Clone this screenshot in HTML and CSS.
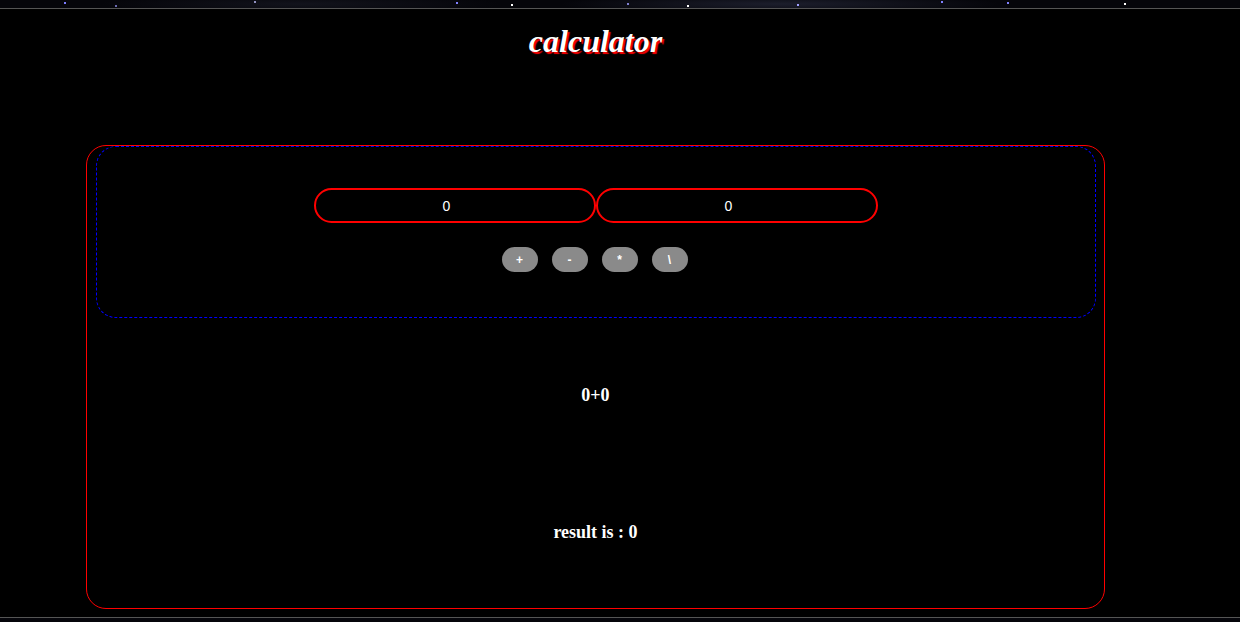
FILE: index.html
```html
<!DOCTYPE html>
<html lang="en">
<head>
<meta charset="utf-8">
<title>calculator</title>
<link rel="stylesheet" href="styles.css">
</head>
<body>
  <div class="page">
    <h1 class="title">calculator</h1>
    <div class="calc">
      <div class="panel">
        <div class="inputs">
          <input class="num" type="text" value="0">
          <input class="num" type="text" value="0">
        </div>
        <div class="ops">
          <button class="op">+</button>
          <button class="op">-</button>
          <button class="op">*</button>
          <button class="op">\</button>
        </div>
      </div>
      <div class="expr">0+0</div>
      <div class="result">result is : 0</div>
    </div>
  </div>
</body>
</html>
```
FILE: styles.css
```css
html {
  margin: 0;
  height: 100%;
  background-color: #05050a;
  background-image:
    radial-gradient(circle at 65px 3px, #7a7aff 0 1px, transparent 1.2px),
    radial-gradient(circle at 116px 6px, #6a6ab0 0 1px, transparent 1.2px),
    radial-gradient(circle at 255px 2px, #9090c0 0 0.8px, transparent 1px),
    radial-gradient(circle at 457px 3px, #8080ff 0 1px, transparent 1.2px),
    radial-gradient(circle at 512px 5px, #ffffff 0 0.8px, transparent 1px),
    radial-gradient(circle at 628px 4px, #8080d0 0 0.8px, transparent 1px),
    radial-gradient(circle at 688px 6px, #ffffff 0 0.8px, transparent 1px),
    radial-gradient(circle at 798px 5px, #a0a0ff 0 1px, transparent 1.2px),
    radial-gradient(circle at 942px 2px, #8080ff 0 0.8px, transparent 1px),
    radial-gradient(circle at 1008px 3px, #8080ff 0 0.8px, transparent 1px),
    radial-gradient(circle at 1125px 4px, #ffffff 0 0.8px, transparent 1px),
    radial-gradient(circle at 1257px 2px, #ffffff 0 0.8px, transparent 1px),
    radial-gradient(circle at 1348px 6px, #ffffff 0 1px, transparent 1.2px),
    radial-gradient(circle at 1400px 5px, #ffffff 0 0.8px, transparent 1px),
    radial-gradient(circle at 1510px 5px, #ffffff 0 1px, transparent 1.2px),
    radial-gradient(ellipse 220px 10px at 780px 4px, #1c1e2c, transparent),
    radial-gradient(ellipse 200px 10px at 300px 4px, #12131c, transparent);
  background-size: 1240px 8px;
  background-repeat: no-repeat;
}

body {
  margin: 8px 0 0;
  height: 608px;
  background: #000;
  border-top: 1px solid #555;
  border-bottom: 1px solid #555;
  box-sizing: content-box;
  font-family: "Liberation Serif", "Times New Roman", serif;
  color: #fff;
  overflow: hidden;
}

.page {
  display: flex;
  flex-direction: column;
  width: 1019px;
  margin-left: 86px;
}

.title {
  margin: 14px 0 0;
  font-size: 32px;
  font-weight: bold;
  font-style: italic;
  line-height: 36px;
  text-align: center;
  color: #fff;
  text-shadow: 2px 2px 1px #ff0000;
}

.calc {
  margin-top: 86px;
  height: 464px;
  box-sizing: border-box;
  border: 1.5px solid #ff0000;
  border-radius: 20px;
  padding: 0 8px;
  display: flex;
  flex-direction: column;
  align-items: center;
}

.panel {
  width: 1000px;
  height: 172px;
  box-sizing: border-box;
  border: 1px dashed #0000ff;
  border-radius: 20px;
  padding-top: 41px;
  display: flex;
  flex-direction: column;
  align-items: center;
}

.inputs {
  display: flex;
  gap: 0;
}

.num {
  width: 282px;
  height: 35px;
  box-sizing: border-box;
  margin: 0;
  border: 2px solid #ff0000;
  border-radius: 18px;
  padding: 0 18px 0 2px;
  background: #000;
  color: #fff;
  text-align: center;
  font-family: "Liberation Sans", Arial, sans-serif;
  font-size: 14px;
  outline: none;
}

.ops {
  margin-top: 24px;
  margin-right: 2px;
  display: flex;
  gap: 14px;
}

.op {
  width: 36px;
  height: 25px;
  border: none;
  border-radius: 13px;
  background: #8a8a8a;
  color: #fff;
  font-family: "Liberation Sans", Arial, sans-serif;
  font-weight: bold;
  font-size: 12px;
  padding: 0;
}

.expr {
  margin-top: 67px;
  font-size: 18px;
  font-weight: bold;
  line-height: 21px;
  text-align: center;
}

.result {
  margin-top: 116px;
  font-size: 18px;
  font-weight: bold;
  line-height: 21px;
  text-align: center;
}
```
